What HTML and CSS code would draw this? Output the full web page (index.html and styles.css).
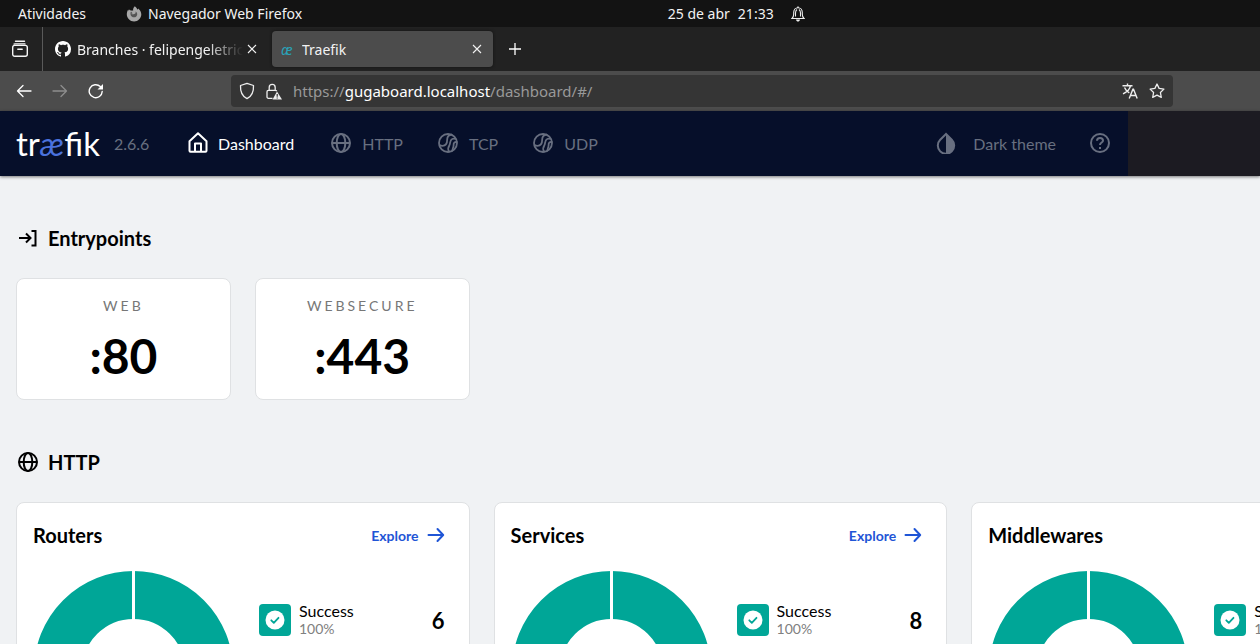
FILE: index.html
```
<!DOCTYPE html>
<html lang="pt-BR">
<head>
<meta charset="utf-8">
<meta name="viewport" content="width=device-width, initial-scale=1">
<title>Traefik</title>
<link rel="stylesheet" href="styles.css">
</head>
<body>
<svg class="defs" aria-hidden="true">
  <symbol id="globe" viewBox="0 0 24 24"><g fill="none" stroke="currentColor" stroke-width="2"><circle cx="12" cy="12" r="9"/><ellipse cx="12" cy="12" rx="4.3" ry="9"/><path d="M3 12h18"/></g></symbol>
  <symbol id="flow" viewBox="0 0 24 24"><g fill="none" stroke="currentColor" stroke-width="1.800" stroke-linecap="round" stroke-linejoin="round"><circle cx="12" cy="12" r="9"/><path d="M15.500 3.600c-2.800.3-4.300 1.900-4.300 4.900 0 4-1.700 6.300-4.700 6.300-1.200 0-2.200-.3-3-.8M13 20.500c-1.400-2.200-.9-4.200.4-6.200 1.200-1.900.2-5.300 2.800-6.300 1-.4 2-.4 3-.2M20.800 11c-2.300-.2-3.300.9-3.200 3 .1 1.900-.8 3-1.300 5.500"/></g></symbol>
  <symbol id="close" viewBox="0 0 10 10"><path d="M1 1l8 8M9 1L1 9" stroke="currentColor" stroke-width="1.100" fill="none"/></symbol>
  <symbol id="arrow" viewBox="0 0 18 16"><path d="M1.500 8H16M10.500 2L16.200 8l-5.700 6" fill="none" stroke="currentColor" stroke-width="2" stroke-linecap="round" stroke-linejoin="round"/></symbol>
  <symbol id="ok" viewBox="0 0 20 20"><circle cx="10" cy="10" r="9.500" fill="#fff"/><path d="M6.300 10.300l2.500 2.500 4.700-5" fill="none" stroke="#00a697" stroke-width="1.800" stroke-linecap="round" stroke-linejoin="round"/></symbol>
  <symbol id="donut" viewBox="0 0 200 200"><circle cx="100.500" cy="100.500" r="75.500" fill="none" stroke="#00a697" stroke-width="48"/><path d="M100.500 0v50" stroke="#fff" stroke-width="3"/></symbol>
</svg>

<div class="desktop-bar">
  <div class="desktop-left">
    <button type="button">Atividades</button>
    <button type="button" class="app-menu">
      <svg width="16" height="16" viewBox="0 0 16 16"><path d="M8.800.3c1.200.9 2.100 2 2.500 3.300.5-.2.800-.6.900-1.100C14 4 15.300 6 15.300 8.300c0 4-3.200 7.200-7.200 7.200S.800 12.300.800 8.300c0-1.800.5-3.500 1.500-4.900l.4 1.400 1-1.300 1.200 1.300c1-.3 1.700-.2 2.200 0C6.900 3 7.500 1.400 8.800.3z" fill="#a8a8a8"/><path d="M5 5.500c-1 1.600-.7 4.200 1 5.300 2 1.200 4.800.4 5.200-2 .2-1.500-.5-2.700-1.700-3.300.5 1.400-.2 2.300-1.300 2.500-1.200.2-2 .6-2.900-.2l1.400-.5C6.300 6.800 5.500 6.300 5 5.500z" fill="#555"/></svg>
      Navegador Web Firefox</button>
  </div>
  <button type="button" class="clock"><span>25 de abr</span><span>21:33</span></button>
  <button type="button" class="bell" aria-label="Notificações">
    <svg width="14" height="16" viewBox="0 0 14 16"><g fill="none" stroke="#eee" stroke-width="1.100"><path d="M1 12.500h12c-1.300-1-1.700-2.200-1.700-4.500V6.500C11.300 4 9.500 1.700 7 1.700S2.700 4 2.700 6.500V8c0 2.300-.4 3.500-1.700 4.500zM4.500 10.500V7c0-1.500.6-2.700 1.500-3.500M9.500 10.500V7c0-1.500-.6-2.700-1.500-3.500"/></g><path d="M5 13.500h4c-.3 1.400-1 2-2 2s-1.700-.6-2-2zM6.300.5h1.400v1.500H6.300z" fill="#eee"/></svg>
  </button>
</div>

<div class="tab-bar">
  <button type="button" class="recent" aria-label="Firefox View">
    <svg width="18" height="18" viewBox="0 0 18 18" fill="none" stroke="#f5f5f5" stroke-width="1.400" stroke-linecap="round"><path d="M4.500 1.200h9M3 4.100C3 4 3.300 3.900 4 3.900h10M6.800 9.300h4.400"/><rect x="1.700" y="5.400" width="14.600" height="10.900" rx="2"/></svg>
  </button>
  <div class="tab">
    <svg width="16" height="16" viewBox="0 0 16 16"><path fill="#fff" d="M8 0C3.580 0 0 3.580 0 8c0 3.540 2.290 6.530 5.470 7.590.4.070.55-.17.55-.38 0-.19-.01-.82-.01-1.490-2.010.37-2.530-.49-2.690-.94-.09-.23-.48-.94-.82-1.130-.28-.15-.68-.52-.01-.53.63-.01 1.080.58 1.230.82.72 1.210 1.870.87 2.330.66.07-.52.28-.87.51-1.070-1.780-.2-3.640-.89-3.640-3.950 0-.87.31-1.590.82-2.150-.08-.2-.36-1.020.08-2.120 0 0 .67-.21 2.200.82.64-.18 1.320-.27 2-.27s1.360.09 2 .27c1.530-1.040 2.200-.82 2.200-.82.44 1.100.16 1.920.08 2.120.51.56.82 1.270.82 2.150 0 3.070-1.870 3.750-3.650 3.950.29.25.54.73.54 1.480 0 1.070-.01 1.930-.01 2.200 0 .21.15.46.55.38A8.010 8.010 0 0 0 16 8c0-4.420-3.580-8-8-8z"/></svg>
    <span class="tab-title fade">Branches · felipengeletric</span>
    <button type="button" aria-label="Fechar aba"><svg width="10" height="10"><use href="#close"/></svg></button>
  </div>
  <div class="tab active">
    <span class="favicon">æ</span>
    <span class="tab-title">Traefik</span>
    <button type="button" aria-label="Fechar aba"><svg width="10" height="10"><use href="#close"/></svg></button>
  </div>
  <button type="button" class="new-tab" aria-label="Nova aba"><svg width="12" height="12" viewBox="0 0 12 12"><path d="M6 0v12M0 6h12" stroke="#fff" stroke-width="1.300"/></svg></button>
</div>

<div class="toolbar">
  <div class="nav-buttons">
    <button type="button" aria-label="Voltar"><svg width="16" height="16" viewBox="0 0 16 16" fill="none" stroke="#fff" stroke-width="1.300" stroke-linecap="round" stroke-linejoin="round"><path d="M15 8H1.500M7 2.500L1.500 8 7 13.500"/></svg></button>
    <button type="button" aria-label="Avançar" disabled><svg width="16" height="16" viewBox="0 0 16 16" fill="none" stroke="#8d8d8d" stroke-width="1.300" stroke-linecap="round" stroke-linejoin="round"><path d="M1 8h13.500M9 2.500L14.500 8 9 13.500"/></svg></button>
    <button type="button" aria-label="Recarregar"><svg width="16" height="16" viewBox="0 0 16 16"><path d="M14.200 8.500A6.500 6.500 0 1 1 12.300 3.600" fill="none" stroke="#fff" stroke-width="1.400" stroke-linecap="round"/><path d="M15 1v5.500H9.500z" fill="#fff"/></svg></button>
  </div>
  <div class="url">
    <svg width="16" height="18" viewBox="0 0 16 18"><path d="M8 1.300l6.500 2.200c.3 6.300-1.500 10.700-6.500 13.200C3 14.200 1.200 9.800 1.500 3.500z" fill="none" stroke="#eee" stroke-width="1.300" stroke-linejoin="round"/></svg>
    <svg width="16" height="17" viewBox="0 0 16 17"><path d="M6.500 15.300H2.400A1.400 1.400 0 0 1 1 13.900V8.800a1.400 1.400 0 0 1 1.400-1.400h7.100c.6 0 1 .3 1.200.8M3.200 7V4.400a3 3 0 0 1 6 0V7" fill="none" stroke="#eee" stroke-width="1.300"/><path d="M11 8.500l5 8H6.500z" fill="#eee"/><path d="M11.200 11v2.800M11.200 14.400v1.200" stroke="#353535" stroke-width="1.200"/></svg>
    <a class="address" href="#/">https://<b>gugaboard.localhost</b>/dashboard/#/</a>
    <button type="button" aria-label="Traduzir"><svg width="16" height="16" viewBox="0 0 16 16" fill="none" stroke="#eee" stroke-width="1.400"><path d="M.5 2.700h10M5.500.5v2.200M8.500 2.700C8 6 5 9 1 10.800M2.500 4.500C3.500 7 5 8.500 7.300 9.800M7.200 15.500l3.700-9.300h.6l3.700 9.300M8.500 12.500h5.500"/></svg></button>
    <button type="button" aria-label="Favoritar"><svg width="16" height="16" viewBox="0 0 16 16"><path d="M8 1l2.100 4.400 4.800.7-3.500 3.400.9 4.900L8 12.100l-4.300 2.300.9-4.900L1.100 6.100l4.800-.7z" fill="none" stroke="#eee" stroke-width="1.300" stroke-linejoin="round"/></svg></button>
  </div>
</div>

<header class="app-header">
  <nav class="app-nav">
    <a href="#/" class="logo">tr<i>æ</i>fik</a>
    <span class="version">2.6.6</span>
    <a href="#/" class="item current"><svg width="20" height="22" viewBox="0 0 20 22" fill="none" stroke="currentColor" stroke-width="2" stroke-linejoin="round"><path d="M1.500 9.200L10 1.300l8.500 7.900v9.500a1 1 0 0 1-1 1h-15a1 1 0 0 1-1-1zM7 19.500v-8h6v8"/></svg>Dashboard</a>
    <a href="#/http" class="item"><svg width="24" height="24"><use href="#globe"/></svg>HTTP</a>
    <a href="#/tcp" class="item"><svg width="24" height="24"><use href="#flow"/></svg>TCP</a>
    <a href="#/udp" class="item"><svg width="24" height="24"><use href="#flow"/></svg>UDP</a>
    <button type="button" class="item theme"><svg width="20" height="22" viewBox="0 0 20 22"><path d="M10 2L4.200 7.800a8.200 8.200 0 1 0 11.600 0z" fill="none" stroke="currentColor" stroke-width="2"/><path d="M10 1.500l6.200 6.200a8.500 8.500 0 0 1-6.200 14z" fill="currentColor"/></svg>Dark theme</button>
    <button type="button" class="item" aria-label="Help"><svg width="20" height="20" viewBox="0 0 20 20"><circle cx="10" cy="10" r="9" fill="none" stroke="currentColor" stroke-width="2"/><path d="M7 7.800C7 6 8.300 5 10 5s3 1 3 2.700c0 1.800-3 2-3 4.300" fill="none" stroke="currentColor" stroke-width="2"/><path d="M9 14h2v2H9z" fill="currentColor"/></svg></button>
  </nav>
</header>

<main>
  <section>
    <h2><svg width="24" height="24" viewBox="0 0 24 24" fill="none" stroke="currentColor" stroke-width="2"><path d="M3 12h11M10 7.500l4.500 4.500-4.500 4.500M15.500 5h4v14.500h-4"/></svg>Entrypoints</h2>
    <div class="row">
      <article class="entry"><h3>WEB</h3><p>:80</p></article>
      <article class="entry"><h3>WEBSECURE</h3><p>:443</p></article>
    </div>
  </section>
  <section>
    <h2><svg width="24" height="24"><use href="#globe"/></svg>HTTP</h2>
    <div class="row">
      <article class="panel">
        <div class="panel-head"><h3>Routers</h3><a href="#/http/routers">Explore<svg width="18" height="16"><use href="#arrow"/></svg></a></div>
        <div class="panel-body">
          <svg class="donut" width="200" height="200"><use href="#donut"/></svg>
          <div class="stat"><span class="badge"><svg width="20" height="20"><use href="#ok"/></svg></span><p>Success<small>100%</small></p><strong>6</strong></div>
        </div>
      </article>
      <article class="panel">
        <div class="panel-head"><h3>Services</h3><a href="#/http/services">Explore<svg width="18" height="16"><use href="#arrow"/></svg></a></div>
        <div class="panel-body">
          <svg class="donut" width="200" height="200"><use href="#donut"/></svg>
          <div class="stat"><span class="badge"><svg width="20" height="20"><use href="#ok"/></svg></span><p>Success<small>100%</small></p><strong>8</strong></div>
        </div>
      </article>
      <article class="panel">
        <div class="panel-head"><h3>Middlewares</h3></div>
        <div class="panel-body">
          <svg class="donut" width="200" height="200"><use href="#donut"/></svg>
          <div class="stat"><span class="badge"><svg width="20" height="20"><use href="#ok"/></svg></span><p>Success<small>100%</small></p></div>
        </div>
      </article>
    </div>
  </section>
</main>
</body>
</html>
```
FILE: styles.css
```
* { box-sizing: border-box; }
body {
  margin: 0;
  height: 100vh;
  overflow: hidden;
  display: flex;
  flex-direction: column;
  background: #f0f2f4;
  color: #000;
  font-family: Lato, "Open Sans", sans-serif;
}
h2, h3, p { margin: 0; }
svg { display: block; flex: none; }
a { color: inherit; text-decoration: none; }
button {
  display: flex;
  align-items: center;
  padding: 0;
  border: 0;
  background: none;
  color: inherit;
  font: inherit;
  white-space: nowrap;
}
.defs { position: absolute; width: 0; height: 0; }

.desktop-bar, .tab-bar, .toolbar {
  display: flex;
  flex: none;
  align-items: center;
  color: #f2f2f2;
  font-family: "Noto Sans", sans-serif;
  font-size: 14px;
}
.desktop-bar { height: 27px; background: #131313; }
.desktop-left { display: flex; flex: 0 0 53%; gap: 40px; padding-left: 18px; }
.app-menu { gap: 6px; }
.clock { gap: 8px; }
.bell { margin-left: 17px; }

.tab-bar { height: 44px; background: #222; }
.recent { width: 43px; height: 44px; justify-content: center; border-right: 1px solid #5a5a5a; padding-right: 2px; }
.tab {
  display: flex;
  align-items: center;
  gap: 6px;
  width: 221px;
  height: 36px;
  padding: 0 7px 0 12px;
  border-radius: 4px;
}
.tab.active { margin-left: 8px; padding: 0 11px 0 9px; background: #4c4c4c; box-shadow: 0 0 3px #111; }
.tab-title { flex: 1; min-width: 0; overflow: hidden; white-space: nowrap; }
.tab-title.fade { mask-image: linear-gradient(to left, transparent, #000 36px); }
.tab > button { margin-left: -2px; }
.favicon { width: 15px; color: #2aa2b8; font-size: 14px; font-style: italic; }
.new-tab { margin-left: 16px; }

.toolbar { height: 40px; padding-right: 87px; background: #4c4c4c; }
.nav-buttons { display: flex; flex: 0 0 231px; gap: 20px; padding-left: 16px; }
.url {
  display: flex;
  flex: 1;
  align-items: center;
  gap: 11px;
  height: 32px;
  padding: 0 8px;
  border-radius: 4px;
  background: #353535;
}
.address { flex: 1; color: #999; font-size: 15px; }
.address b { color: #fff; font-weight: 400; }

.app-header { position: relative; flex: none; padding-right: 132px; background: #1c1b22; box-shadow: 0 1px 3px rgba(0, 0, 0, .5); }
.app-nav {
  display: flex;
  align-items: center;
  height: 65px;
  padding: 0 18px 1px 16px;
  background: #060f2a;
  color: #686f80;
  font-size: 16px;
}
.logo { width: 98px; color: #fff; font-size: 33px; }
.logo i { color: #4a72dd; }
.version { width: 74px; }
.item { display: flex; align-items: center; gap: 9px; margin-right: 33px; }
.item.current { gap: 10px; margin-right: 35px; color: #fff; }
.item.theme { gap: 17px; margin-right: 34px; margin-left: auto; }
.item:last-child { margin-right: 0; }

main { display: flex; flex-direction: column; gap: 48px; padding: 48px 16px; }
h2 { display: flex; align-items: center; gap: 8px; height: 30px; padding-bottom: 2px; margin-bottom: 24px; font-size: 20px; font-weight: 700; }
.row { display: flex; gap: 24px; }
.entry, .panel { flex: none; border: 1px solid #dfe1e3; border-radius: 8px; background: #fff; }
.entry { width: calc(18vw - 12px); height: 122px; padding-top: 15px; text-align: center; }
.entry h3 { color: #777; font-size: 14px; line-height: 24px; font-weight: 400; letter-spacing: 3px; }
.entry p { font-size: 48px; line-height: 76px; font-weight: 700; }
.panel { width: 36vw; padding: 16px 24px 16px 16px; }
.panel-head { display: flex; align-items: center; justify-content: space-between; height: 32px; }
.panel-head h3 { font-size: 20px; font-weight: 700; }
.panel-head a { display: flex; align-items: center; gap: 8px; color: #1f55d6; font-size: 14px; font-weight: 700; }
.panel-body { display: flex; gap: 26px; padding-top: 19px; }
.stat { display: flex; flex: 1; align-items: center; gap: 8px; height: 36px; margin-top: 32px; }
.badge { display: flex; align-items: center; justify-content: center; width: 32px; height: 32px; border-radius: 4px; background: #00a697; }
.stat p { flex: 1; padding-bottom: 2px; font-size: 16px; line-height: 20px; }
.stat small { display: block; color: #808080; font-size: 14px; line-height: 16px; }
.stat strong { font-size: 22px; }
```
